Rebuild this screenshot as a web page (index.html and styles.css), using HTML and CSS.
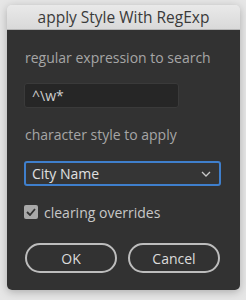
FILE: index.html
```html
<!DOCTYPE html>
<html lang="en">
<head>
    <meta charset="UTF-8">
    <title>apply Style With RegExp</title>
    <link rel="stylesheet" href="styles.css">
</head>
<body>
    <div class="dialog">
        <div class="titlebar">apply Style With RegExp</div>
        <div class="content">
            <div class="label">regular expression to search</div>
            <div class="input">^\w*</div>

            <div class="label label-second">character style to apply</div>
            <div class="select">
                <span>City Name</span>
                <svg width="10" height="6" viewBox="0 0 10 6">
                    <path d="M1 1 L5 5 L9 1" fill="none" stroke="#c8c8c8" stroke-width="1.3"/>
                </svg>
            </div>

            <div class="check">
                <span class="box">
                    <svg width="10" height="8" viewBox="0 0 10 8">
                        <path d="M1 4 L4 7 L9 1" fill="none" stroke="#333" stroke-width="1.8"/>
                    </svg>
                </span>
                <span>clearing overrides</span>
            </div>

            <div class="buttons">
                <span class="btn">OK</span>
                <span class="btn">Cancel</span>
            </div>
        </div>
    </div>
</body>
</html>
```

FILE: styles.css
```css
* {
    margin: 0;
    padding: 0;
    box-sizing: border-box;
}

body {
    background-color: #e6e6e6;
    font-family: "Open Sans", "DejaVu Sans", sans-serif;
    height: 300px;
    overflow: hidden;
}

.dialog {
    width: 233px;
    height: 285px;
    margin: 5px 0 0 7px;
    border-radius: 5px;
    overflow: hidden;
    box-shadow: 0 2px 8px rgba(0, 0, 0, 0.25);
    display: flex;
    flex-direction: column;
}

.titlebar {
    height: 25px;
    line-height: 25px;
    text-align: center;
    font-size: 15.5px;
    color: #3a3a3a;
    background: linear-gradient(#e9e9e9, #d9d9d9);
    border-bottom: 1px solid #b5b5b5;
}

.content {
    flex: 1;
    background-color: #323232;
    padding: 18px 0 0 17px;
    display: flex;
    flex-direction: column;
}

.label {
    height: 20px;
    line-height: 20px;
    font-size: 14px;
    color: #a6a6a6;
    padding-left: 1px;
}

.input {
    width: 155px;
    height: 25px;
    margin-top: 15px;
    background-color: #262626;
    border: 1px solid #3a3a3a;
    border-radius: 3px;
    color: #cfcfcf;
    font-size: 14px;
    line-height: 23px;
    padding-left: 7px;
}

.label-second {
    margin-top: 17px;
}

.select {
    width: 197px;
    height: 25px;
    margin-top: 16px;
    border: 2px solid #3f7fcc;
    border-radius: 3px;
    background-color: #353535;
    color: #e0e0e0;
    font-size: 14px;
    font-weight: 500;
    display: flex;
    align-items: center;
    justify-content: space-between;
    padding: 0 8px 0 6px;
}

.check {
    height: 20px;
    margin-top: 16px;
    display: flex;
    align-items: center;
    gap: 6px;
    font-size: 14px;
    color: #c8c8c8;
}

.check .box {
    width: 14px;
    height: 14px;
    border-radius: 2px;
    background-color: #a9a9a9;
    display: flex;
    align-items: center;
    justify-content: center;
}

.buttons {
    display: flex;
    gap: 11px;
    margin-top: 21px;
    padding-left: 1px;
}

.btn {
    width: 92px;
    height: 30px;
    border: 2px solid #bdbdbd;
    border-radius: 15px;
    color: #dcdcdc;
    font-size: 14px;
    font-weight: 500;
    display: flex;
    align-items: center;
    justify-content: center;
}
```
